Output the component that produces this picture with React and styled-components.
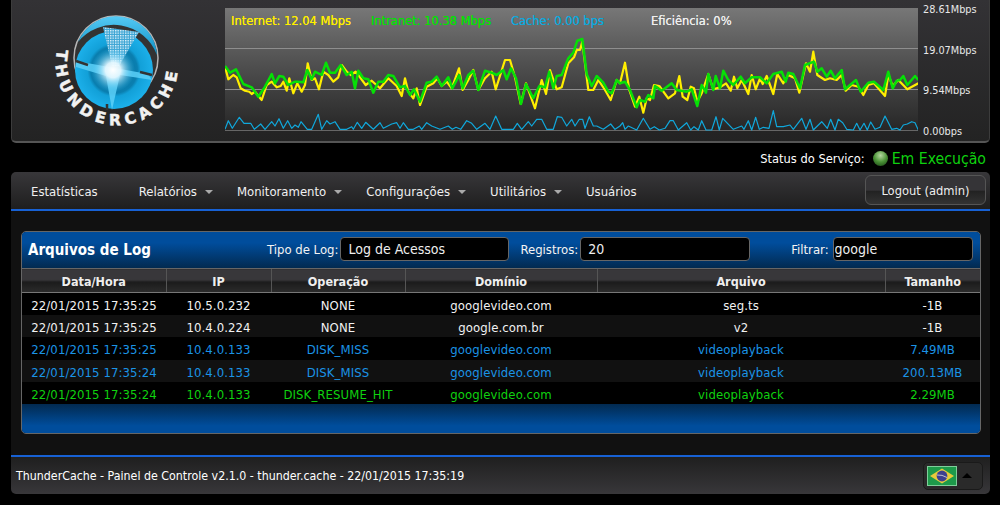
import React from 'react'
import styled, { createGlobalStyle } from 'styled-components'

const GlobalStyle = createGlobalStyle`
  html, body { margin: 0; padding: 0; background: #000; }
  body {
    font-family: "DejaVu Sans", Verdana, sans-serif;
    font-stretch: condensed;
    font-size: 13px;
    color: #fff;
  }
`

const Page = styled.div`
  width: 979px;
  margin-left: 11px;
`

const TopPanel = styled.div`
  height: 143px;
  box-sizing: border-box;
  display: flex;
  background: linear-gradient(#333235, #232323);
  border-bottom: 2px solid #555;
  border-left: 1px solid #3c3c3c;
  border-right: 1px solid #3c3c3c;
  border-radius: 0 0 5px 5px;
`

const LogoBox = styled.div`
  width: 213px;
  flex: none;
`

const Chart = styled.div`
  position: relative;
  width: 693px;
  height: 123px;
  margin-top: 8px;
  flex: none;
  background: linear-gradient(#777, #505050 45%, #262626);
`

const Legend = styled.div`
  position: absolute;
  top: 6px;
  left: 6px;
  display: flex;
  font-size: 12.75px;
  line-height: 14px;
`

const LegendItem = styled.span`
  color: ${p => p.color};
  width: ${p => p.width}px;
  text-shadow: 0 0 0.6px ${p => p.color};
`

const Axis = styled.div`
  height: 134px;
  margin: 4px 0 0 5px;
  display: flex;
  flex-direction: column;
  justify-content: space-between;
  font-size: 10.8px;
  line-height: 12px;
  color: #e8e8e8;
`

const StatusBar = styled.div`
  height: 29px;
  box-sizing: border-box;
  padding: 2px 4px 0 0;
  display: flex;
  align-items: center;
  justify-content: flex-end;
  font-size: 12.75px;
`

const StatusValue = styled.span`
  color: #0fd10f;
  font-size: 15.7px;
  margin-left: 4px;
`

const Ball = styled.span`
  width: 15px;
  height: 15px;
  margin-left: 8px;
  border-radius: 50%;
  background: radial-gradient(circle at 50% 30%, #b5d8a0, #4a9236 50%, #153c12);
`

const NavBar = styled.div`
  height: 37px;
  display: flex;
  align-items: center;
  background: linear-gradient(#38373a, #1e1e1e);
  border-bottom: 2px solid #1761d4;
  border-radius: 5px 5px 0 0;
`

const NavItem = styled.div`
  display: flex;
  align-items: center;
  padding: 2px ${p => (p.$caret ? 4 : 21)}px 0 20px;
  font-size: 13px;
  color: #f0f0f0;
`

const Caret = styled.span`
  width: 0;
  height: 0;
  margin: 0 0 0 8px;
  border-left: 4px solid transparent;
  border-right: 4px solid transparent;
  border-top: 4px solid #aaa;
`

const LogoutButton = styled.div`
  margin-left: auto;
  margin-right: 4px;
  margin-top: -1px;
  width: 121px;
  height: 30px;
  box-sizing: border-box;
  display: flex;
  align-items: center;
  justify-content: center;
  font-size: 12.8px;
  color: #eee;
  border: 1px solid #555;
  border-radius: 6px;
  background: linear-gradient(#353437 50%, #222 55%, #333);
`

const Main = styled.div`
  padding: 20px 9px 21px 10px;
  background: #111;
`

const LogBox = styled.div`
  border: 1px solid #666;
  border-radius: 5px;
  overflow: hidden;
  height: 203px;
  box-sizing: border-box;
`

const LogHeader = styled.div`
  height: 36px;
  box-sizing: border-box;
  padding-bottom: 2px;
  display: flex;
  align-items: center;
  background: linear-gradient(#004d9c 30%, #022a50);
`

const LogTitle = styled.div`
  width: 245px;
  margin-top: 2px;
  padding-left: 6px;
  box-sizing: border-box;
  font-size: 15px;
  font-weight: bold;
`

const FieldLabel = styled.label`
  font-size: 13px;
  margin-left: ${p => p.$gap || 0}px;
  margin-right: ${p => p.$right || 1}px;
  color: #f4f4f4;
`

const Field = styled.input`
  width: ${p => p.width}px;
  height: 24px;
  box-sizing: border-box;
  padding: 0 0 0 ${p => p.$pad}px;
  background: #000;
  color: #eee;
  border: 1px solid #666;
  border-radius: 4px;
  font: inherit;
  font-size: 14px;
  outline: none;
`

const LogTable = styled.table`
  width: 100%;
  table-layout: fixed;
  border-collapse: collapse;
  text-align: center;
`

const HeadCell = styled.th`
  box-sizing: border-box;
  width: ${p => p.width}px;
  height: 24px;
  padding: 1px 0 0;
  font-size: 12.5px;
  font-weight: bold;
  color: #eee;
  background: linear-gradient(#38373a 45%, #1b1b1b 55%, #2c2c2c);
  border-top: 1px solid #666;
  border-bottom: 1px solid #777;
  border-left: 1px solid #555;
  &:first-child { border-left: none; }
`

const Row = styled.tr`
  height: 22.4px;
  background: ${p => (p.$odd ? '#111' : '#000')};
  color: ${p => p.color};
`

const Cell = styled.td`
  padding: 3px 0 0;
  font-size: 13px;
  letter-spacing: 0.1px;
`

const LogFooter = styled.div`
  height: 31px;
  background: linear-gradient(#022a50, #004d9c 70%);
`

const Footer = styled.div`
  height: 37px;
  display: flex;
  align-items: center;
  justify-content: space-between;
  padding: 0 7px 0 5px;
  border-top: 2px solid #1761d4;
  border-radius: 0 0 5px 5px;
  background: linear-gradient(#1f1f1f, #38373a);
  font-size: 12.3px;
`

const LangPicker = styled.div`
  width: 60px;
  height: 28px;
  box-sizing: border-box;
  display: flex;
  align-items: center;
  gap: 5px;
  padding-left: 3px;
  border: 1px solid #1a1a1a;
  border-radius: 5px;
  background: #2a2a2a;
`

const UpCaret = styled.span`
  width: 0;
  height: 0;
  border-left: 5px solid transparent;
  border-right: 5px solid transparent;
  border-bottom: 5px solid #000;
`

// traced off the chart, x/y in 3x crop coords
const yellowA = [[15,200],[25,238],[40,225],[50,232],[62,265],[75,272],[88,275],[95,282],[105,275],[125,300],[140,255],[155,245],[170,262],[182,258],[190,245],[200,272],[208,235],[220,280],[232,250],[245,275],[255,255],[263,190],[275,240],[285,235],[297,268],[310,215],[325,225],[340,245],[355,232],[365,195],[380,215],[392,225],[407,215],[420,232],[437,255],[455,242],[480,265],[505,235],[530,258],[545,288],[555,235],[565,275],[580,295],[590,265],[600,315],[620,260],[640,250],[652,235],[665,258],[680,245],[695,265],[717,205],[728,270],[745,240],[760,210],[775,270],[795,235],[815,215],[827,268],[855,180],[870,180],[885,232],[902,312],[918,250],[945,325],[965,240],[978,282],[990,210],[1010,268],[1025,262],[1045,190],[1062,172],[1070,150],[1080,150],[1087,125],[1105,270],[1120,270],[1135,240],[1155,270],[1172,300],[1190,240],[1200,250]]
const yellowB = [[15,188],[28,270],[45,320],[58,290],[70,338],[80,295],[90,300],[102,255],[118,258],[145,295],[165,280],[178,228],[188,290],[202,300],[212,260],[222,265],[232,305],[245,280],[265,222],[280,268],[300,262],[318,250],[332,272],[342,230],[352,265],[365,240],[385,282],[395,225],[407,268],[420,235],[428,252],[440,228],[460,282],[472,222],[490,250],[505,225],[525,235],[538,278],[558,190],[570,215],[580,155],[592,225],[615,240],[630,235],[650,240],[665,225],[677,272],[695,255],[715,260],[730,285],[745,255],[762,250],[795,288],[805,225],[818,258],[835,240],[862,268],[880,258],[895,250]]
const greenA = [[15,198],[30,218],[48,208],[70,252],[95,262],[115,290],[135,260],[155,222],[165,250],[178,228],[190,230],[205,255],[225,245],[232,245],[250,247],[262,210],[275,238],[285,215],[305,225],[318,188],[330,218],[345,218],[362,195],[380,225],[395,215],[405,265],[415,212],[430,235],[445,238],[460,278],[475,245],[490,245],[505,225],[520,228],[540,262],[555,258],[570,285],[582,268],[600,305],[620,248],[635,245],[650,230],[665,258],[685,232],[697,265],[718,225],[728,265],[745,225],[760,212],[775,270],[795,212],[815,218],[830,225],[850,210],[860,238],[873,205],[888,235],[903,312],[918,252],[940,295],[958,258],[975,262],[988,215],[1000,265],[1010,228],[1025,225],[1045,175],[1060,158],[1072,122],[1087,117],[1100,222],[1115,258],[1130,228],[1150,248],[1165,275],[1175,280],[1190,240],[1200,250]]
const greenB = [[15,245],[30,270],[50,322],[60,300],[75,305],[85,285],[100,295],[105,258],[125,272],[155,250],[170,270],[200,275],[215,268],[232,318],[245,255],[258,278],[265,222],[280,270],[287,228],[300,265],[310,212],[325,240],[340,255],[362,230],[375,250],[395,232],[420,232],[440,250],[460,222],[485,215],[497,245],[505,218],[520,222],[540,265],[555,195],[582,185],[592,215],[605,205],[620,230],[632,212],[645,235],[665,210],[675,268],[690,255],[708,240],[722,275],[745,248],[762,245],[790,270],[805,215],[818,265],[830,242],[840,240],[850,228],[862,255],[885,228],[895,240]]
const blueA = [[15,388],[25,362],[37,385],[58,352],[72,370],[92,370],[103,388],[122,372],[135,388],[155,365],[165,378],[177,356],[190,385],[203,362],[215,385],[225,375],[235,382],[243,365],[262,388],[275,388],[295,343],[305,388],[320,362],[330,372],[345,365],[360,388],[380,388],[395,380],[400,388],[412,367],[425,385],[437,367],[460,388],[480,368],[490,385],[515,372],[530,368],[540,385],[550,368],[565,388],[580,388],[598,378],[605,388],[620,368],[635,378],[660,388],[685,378],[697,388],[708,382],[722,388],[740,362],[755,370],[770,388],[795,370],[810,388],[827,348],[845,388],[880,388],[892,370],[905,388],[925,365],[935,378],[950,358],[965,358],[980,388],[1000,388],[1012,350],[1025,352],[1040,378],[1055,358],[1065,378],[1078,358],[1088,358],[1095,385],[1108,350],[1120,378],[1130,378],[1150,388],[1172,372],[1185,388],[1200,378]]
const blueB = [[8,368],[15,388],[25,378],[50,390],[70,355],[90,388],[103,380],[118,390],[135,385],[150,362],[160,362],[175,390],[200,368],[212,390],[222,380],[235,390],[245,362],[258,390],[275,390],[288,350],[298,390],[308,355],[340,388],[365,378],[372,388],[385,362],[395,390],[407,352],[418,388],[430,382],[447,385],[460,332],[470,380],[490,380],[510,375],[520,388],[545,355],[558,388],[570,358],[580,390],[605,365],[622,385],[632,358],[645,390],[655,358],[668,368],[680,388],[700,390],[710,370],[720,390],[732,370],[742,390],[752,366],[765,388],[780,382],[795,348],[815,388],[830,385],[840,390],[850,375],[862,372],[875,365],[885,368],[895,390]]

const toPoints = (a, b) => [
  ...a.map(([x, y]) => [x / 3 - 5, y / 3 - 8]),
  ...b.map(([x, y]) => [x / 3 + 395, y / 3 - 8]),
].map(p => p.map(v => v.toFixed(1)).join(',')).join(' ')

const TrafficChart = () => (
  <svg width="693" height="123" viewBox="0 0 693 123" style={{ display: 'block' }}>
    <g stroke="#8e8e8e" strokeWidth="1">
      <line x1="0" x2="693" y1="40.5" y2="40.5" />
      <line x1="0" x2="693" y1="81.5" y2="81.5" />
      <line x1="0" x2="693" y1="122.5" y2="122.5" stroke="#666" />
    </g>
    <g fill="none" strokeLinejoin="round">
      <polyline points={toPoints(blueA, blueB)} stroke="#10a8dc" strokeWidth="1.2" />
      <polyline points={toPoints(yellowA, yellowB)} stroke="#ffee00" strokeWidth="2.2" />
      <polyline points={toPoints(greenA, greenB)} stroke="#06e006" strokeWidth="2.5" />
    </g>
  </svg>
)

const Logo = () => (
  <svg width="213" height="141" viewBox="12 0 213 141" style={{ display: 'block' }}>
    <defs>
      <radialGradient id="sphere" cx="50%" cy="50%" r="50%">
        <stop offset="0" stopColor="#0a6c98" />
        <stop offset="0.6" stopColor="#0a7fb0" />
        <stop offset="0.68" stopColor="#12a0d8" />
        <stop offset="1" stopColor="#1cb0ea" />
      </radialGradient>
      <radialGradient id="flash" cx="50%" cy="50%" r="50%">
        <stop offset="0" stopColor="#fff" />
        <stop offset="0.35" stopColor="#e6f8ff" stopOpacity="0.95" />
        <stop offset="1" stopColor="#3cc4f5" stopOpacity="0" />
      </radialGradient>
      <linearGradient id="cap" x1="0" y1="0" x2="0" y2="1">
        <stop offset="0" stopColor="#55caf5" />
        <stop offset="1" stopColor="#0c8fc4" />
      </linearGradient>
      <pattern id="dots" width="2.5" height="2.5" patternUnits="userSpaceOnUse">
        <rect width="2.5" height="2.5" fill="#3ba4d4" />
        <rect width="1.4" height="1.4" fill="#e4f4fb" />
      </pattern>
      <path id="ring" d="M 56.5 55 A 61 61 0 1 0 177.5 73" />
    </defs>
    <circle cx="116" cy="58" r="42" fill="#333" stroke="#b5b5b5" strokeWidth="1.5" />
    <path d="M 78 42 A 41 41 0 0 1 157 55 A 46 46 0 0 0 78 42 Z" fill="url(#cap)" />
    <circle cx="114" cy="70" r="39" fill="url(#sphere)" />
    <path d="M 103 27 L 139 32 L 119 66 L 112 66 Z" fill="url(#dots)" />
    <path d="M 76 61 L 148 74 L 152 80 L 120 75 L 112 110 L 106 76 L 76 67 Z" fill="#5cd0f8" opacity="0.85" />
    <circle cx="113" cy="70" r="22" fill="url(#flash)" />
    <path d="M 76 61 L 88 65 M 152 75 L 140 72 M 107 110 L 107 104" stroke="#333" strokeWidth="2.5" />
    <text fill="#f2f2f2" stroke="#f2f2f2" strokeWidth="0.5" fontFamily="'DejaVu Sans', sans-serif" fontWeight="bold" fontSize="15.5" letterSpacing="5" textAnchor="middle" style={{ fontStretch: 'normal' }}>
      <textPath href="#ring" startOffset="50%">THUNDERCACHE</textPath>
    </text>
  </svg>
)

const BrazilFlag = () => (
  <svg width="30" height="20" viewBox="0 0 30 20" style={{ display: 'block' }}>
    <rect width="30" height="20" fill="#1d9a4a" />
    <rect x="0.5" y="0.5" width="29" height="19" fill="none" stroke="#7fcf9a" />
    <path d="M15 2.5 L27 10 L15 17.5 L3 10 Z" fill="#e8c93c" />
    <circle cx="15" cy="10" r="5.4" fill="#3d3f8f" />
    <path d="M10 9 Q15 8.5 20 11.5" stroke="#ddd" strokeWidth="0.8" fill="none" />
  </svg>
)

const columns = [
  { name: 'Data/Hora', width: 144 },
  { name: 'IP', width: 105 },
  { name: 'Operação', width: 134 },
  { name: 'Domínio', width: 192 },
  { name: 'Arquivo', width: 288 },
  { name: 'Tamanho', width: 95 },
]

const WHITE = '#f2f2f2'
const BLUE = '#1b94e6'
const GREEN = '#0fd10f'

const logRows = [
  { color: WHITE, cells: ['22/01/2015 17:35:25', '10.5.0.232', 'NONE', 'googlevideo.com', 'seg.ts', '-1B'] },
  { color: WHITE, cells: ['22/01/2015 17:35:25', '10.4.0.224', 'NONE', 'google.com.br', 'v2', '-1B'] },
  { color: BLUE, cells: ['22/01/2015 17:35:25', '10.4.0.133', 'DISK_MISS', 'googlevideo.com', 'videoplayback', '7.49MB'] },
  { color: BLUE, cells: ['22/01/2015 17:35:24', '10.4.0.133', 'DISK_MISS', 'googlevideo.com', 'videoplayback', '200.13MB'] },
  { color: GREEN, cells: ['22/01/2015 17:35:24', '10.4.0.133', 'DISK_RESUME_HIT', 'googlevideo.com', 'videoplayback', '2.29MB'] },
]

const navItems = [
  { label: 'Estatísticas' },
  { label: 'Relatórios', caret: true },
  { label: 'Monitoramento', caret: true },
  { label: 'Configurações', caret: true },
  { label: 'Utilitários', caret: true },
  { label: 'Usuários' },
]

const App = () => (
  <Page>
    <GlobalStyle />
    <TopPanel>
      <LogoBox><Logo /></LogoBox>
      <Chart>
        <TrafficChart />
        <Legend>
          <LegendItem color="#ffee00" width="140">Internet: 12.04 Mbps</LegendItem>
          <LegendItem color="#06e006" width="140">Intranet: 10.38 Mbps</LegendItem>
          <LegendItem color="#10a8dc" width="140">Cache: 0.00 bps</LegendItem>
          <LegendItem color="#eeeeee" width="100">Eficiência: 0%</LegendItem>
        </Legend>
      </Chart>
      <Axis>
        <span>28.61Mbps</span>
        <span>19.07Mbps</span>
        <span>9.54Mbps</span>
        <span>0.00bps</span>
      </Axis>
    </TopPanel>
    <StatusBar>
      Status do Serviço:<Ball /><StatusValue>Em Execução</StatusValue>
    </StatusBar>
    <NavBar>
      {navItems.map(item => (
        <NavItem key={item.label} $caret={item.caret}>
          {item.label}
          {item.caret && <Caret />}
        </NavItem>
      ))}
      <LogoutButton>Logout (admin)</LogoutButton>
    </NavBar>
    <Main>
      <LogBox>
        <LogHeader>
          <LogTitle>Arquivos de Log</LogTitle>
          <FieldLabel $right={2}>Tipo de Log:</FieldLabel>
          <Field width={169} $pad={7} value="Log de Acessos" readOnly />
          <FieldLabel $gap={11} $right={2}>Registros:</FieldLabel>
          <Field width={170} $pad={7} value="20" readOnly />
          <FieldLabel $gap={41} $right={4}>Filtrar:</FieldLabel>
          <Field width={140} $pad={1} value="google" readOnly />
        </LogHeader>
        <LogTable>
          <thead>
            <tr>
              {columns.map(c => <HeadCell key={c.name} width={c.width}>{c.name}</HeadCell>)}
            </tr>
          </thead>
          <tbody>
            {logRows.map((row, i) => (
              <Row key={i} color={row.color} $odd={i % 2 === 1}>
                {row.cells.map((c, j) => <Cell key={j}>{c}</Cell>)}
              </Row>
            ))}
          </tbody>
        </LogTable>
        <LogFooter />
      </LogBox>
    </Main>
    <Footer>
      <span>ThunderCache - Painel de Controle v2.1.0 - thunder.cache - 22/01/2015 17:35:19</span>
      <LangPicker>
        <BrazilFlag />
        <UpCaret />
      </LangPicker>
    </Footer>
  </Page>
)

export default App
